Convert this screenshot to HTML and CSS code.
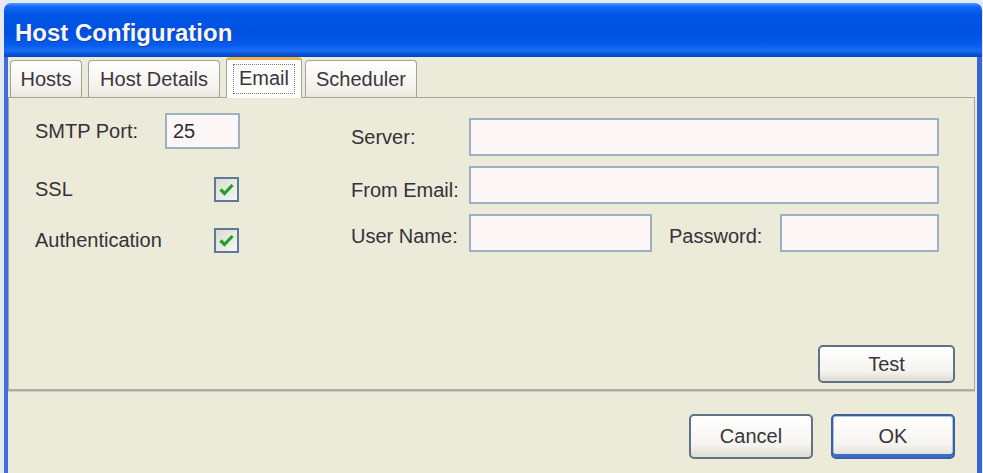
FILE: index.html
```html
<!DOCTYPE html>
<html lang="en">
<head>
    <meta charset="UTF-8">
    <meta name="viewport" content="width=device-width, initial-scale=1.0">
    <title>Host Configuration</title>
    <link rel="stylesheet" href="styles.css">
</head>
<body>
    <div class="window">
        <div class="title-bar">Host Configuration</div>
        <div class="window-body">
            <div class="tabs">
                <div class="tab tab-hosts">Hosts</div>
                <div class="tab tab-details">Host Details</div>
                <div class="tab tab-email active"><span class="focus">Email</span></div>
                <div class="tab tab-scheduler">Scheduler</div>
            </div>
            <div class="panel">
                <div class="fields">
                    <!-- port and security options -->
                    <div class="left-col">
                        <div class="row row-port">
                            <label class="lbl lbl-port" for="port">SMTP Port:</label>
                            <input type="text" id="port" class="field field-port" value="25">
                        </div>
                        <div class="row row-check row-ssl">
                            <span class="lbl lbl-check">SSL</span>
                            <span class="checkbox">
                                <svg width="15" height="13" viewBox="0 0 15 13"><path d="M1.5 6.5 L5.5 10.5 L13.5 2" fill="none" stroke="#22a023" stroke-width="3.2"/></svg>
                            </span>
                        </div>
                        <div class="row row-check row-auth">
                            <span class="lbl lbl-check">Authentication</span>
                            <span class="checkbox">
                                <svg width="15" height="13" viewBox="0 0 15 13"><path d="M1.5 6.5 L5.5 10.5 L13.5 2" fill="none" stroke="#22a023" stroke-width="3.2"/></svg>
                            </span>
                        </div>
                    </div>
                    <!-- server account -->
                    <div class="right-col">
                        <div class="row">
                            <label class="lbl lbl-right" for="server">Server:</label>
                            <input type="text" id="server" class="field field-wide">
                        </div>
                        <div class="row">
                            <label class="lbl lbl-right lbl-low" for="from">From Email:</label>
                            <input type="text" id="from" class="field field-wide">
                        </div>
                        <div class="row">
                            <label class="lbl lbl-right lbl-mid" for="user">User Name:</label>
                            <input type="text" id="user" class="field field-user">
                            <label class="lbl lbl-pass lbl-mid" for="pass">Password:</label>
                            <input type="password" id="pass" class="field field-pass">
                        </div>
                    </div>
                </div>
                <div class="panel-footer">
                    <button class="btn btn-test">Test</button>
                </div>
            </div>
            <div class="button-bar">
                <button class="btn btn-dialog">Cancel</button>
                <button class="btn btn-dialog btn-default">OK</button>
            </div>
        </div>
    </div>
</body>
</html>
```

FILE: styles.css
```css
body {
    margin: 0;
    padding: 3px 0 0 4px;
    background: #e6e9ef;
    font-family: "Liberation Sans", Arial, sans-serif;
    font-size: 20px;
    color: #353238;
}
.window {
    width: 978px;
}
.title-bar {
    height: 54px;
    box-sizing: border-box;
    padding: 6px 0 0 11px;
    display: flex;
    align-items: center;
    border-radius: 7px 7px 0 0;
    background: linear-gradient(to bottom, #4a9bff 0%, #1467f2 7%, #0055e5 22%, #0050e0 55%, #055ced 78%, #1a6cf2 88%, #0042c4 100%);
    color: #f4f8ff;
    font-weight: bold;
    font-size: 24px;
    text-shadow: 1px 1px 0 #1a3c9a;
}
.window-body {
    height: 416px;
    border-left: 4px solid #3f6fdc;
    border-right: 5px solid #3566d8;
    background: #ecead9;
    display: flex;
    flex-direction: column;
}

/* tab strip */
.tabs {
    display: flex;
    align-items: flex-end;
    height: 40px;
    padding-left: 2px;
}
.tab {
    height: 37px;
    box-sizing: border-box;
    border: 1px solid #a0a39c;
    border-bottom: none;
    border-radius: 4px 4px 0 0;
    background: linear-gradient(to bottom, #fefefe, #f4f3ee 70%, #e9e7dc);
    display: flex;
    align-items: center;
    justify-content: center;
    color: #3d3440;
}
.tab-hosts { width: 72px; }
.tab-details { width: 132px; margin-left: 6px; }
.tab-email { width: 76px; margin-left: 6px; }
.tab-scheduler { width: 112px; margin-left: 3px; }
.tab.active {
    height: 41px;
    margin-bottom: -1px;
    border-top: 3px solid #f2b13c;
    background: #fcfcfa;
    position: relative;
    z-index: 1;
}
.focus {
    border: 1px dotted #7d7a70;
    padding: 3px 5px 5px;
    line-height: 20px;
}

/* tab page */
.panel {
    height: 294px;
    box-sizing: border-box;
    margin-right: 2px;
    border: 1px solid #a9a79b;
    border-bottom: 2px solid #aeac9f;
    box-shadow: 0 1px 0 #cfcdbf;
    background: #ecead9;
    display: flex;
    flex-direction: column;
}
.fields {
    display: flex;
}
.left-col {
    width: 316px;
    padding: 15px 0 0 26px;
}
.right-col {
    padding-top: 20px;
    display: flex;
    flex-direction: column;
    gap: 10px;
}
.row {
    display: flex;
    align-items: center;
}
.row-port { height: 36px; }
.row-check { height: 26px; }
.row-ssl { margin-top: 27px; }
.row-auth { margin-top: 25px; }
.right-col .row { height: 38px; }

.lbl { white-space: nowrap; }
.lbl-port { width: 130px; }
.lbl-check { width: 179px; }
.lbl-right { width: 118px; }
.lbl-low { padding-top: 10px; }
.lbl-mid { padding-top: 6px; }
.lbl-pass { width: 128px; padding-left: 17px; box-sizing: border-box; }

.field {
    height: 100%;
    box-sizing: border-box;
    border: 2px solid #9eb0bf;
    background: #fdf6f7;
    font-family: inherit;
    font-size: 20px;
    color: #2e2c30;
    padding: 0 6px;
    outline: none;
}
.field-port { width: 75px; }
.field-wide { width: 470px; }
.field-user { width: 183px; }
.field-pass { width: 159px; }

.checkbox {
    width: 25px;
    height: 25px;
    box-sizing: border-box;
    border: 2px solid #5d7a96;
    background: linear-gradient(135deg, #dcdcd4, #f6f6f2);
    display: flex;
    align-items: center;
    justify-content: center;
}

/* buttons */
.panel-footer {
    margin-top: auto;
    display: flex;
    justify-content: flex-end;
    padding: 0 19px 6px 0;
}
.btn {
    box-sizing: border-box;
    border: 2px solid #5f7286;
    border-radius: 5px;
    background: linear-gradient(to bottom, #ffffff, #f5f4ef 70%, #dedbd0);
    font-family: inherit;
    font-size: 20px;
    color: #3a3438;
    padding: 0;
}
.btn-test {
    width: 137px;
    height: 38px;
}
.button-bar {
    display: flex;
    justify-content: flex-end;
    gap: 18px;
    padding: 23px 22px 0 0;
}
.btn-dialog {
    width: 124px;
    height: 45px;
}
.btn-default {
    border-color: #3d5f9e;
    box-shadow: inset 0 -3px 0 #3a6ad6, inset 0 0 0 1px #a8c4f0;
}
```
